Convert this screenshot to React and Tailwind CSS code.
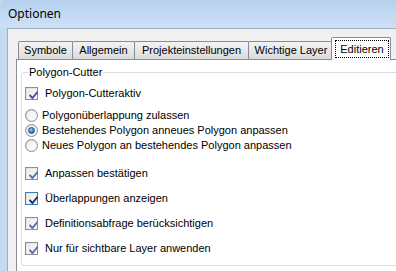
import React from 'react';

// Win7-style check glyph
const Check = ({ color }) => (
  <svg width="9" height="9" viewBox="0 0 9 9" className="absolute left-[1px] top-[1px]">
    <path d="M1 4.5 L3.4 7 L8 1.5" fill="none" stroke={color} strokeWidth="1.9" strokeLinecap="square" />
  </svg>
);

const CheckBox = ({ label, dark = false, mark = '#5a6db4' }) => (
  <div className="flex items-center h-[14px]">
    <div
      className={`relative w-[13px] h-[13px] border ${dark ? 'border-[#3c7fb1]' : 'border-[#8e8f8f]'} bg-gradient-to-br from-[#dcdcdc] to-[#fbfbfb] p-px`}
    >
      <div className="relative w-full h-full border border-[#f4f4f4] bg-gradient-to-br from-[#e6e6e6] to-[#ffffff]">
        <Check color={dark ? '#1c2e80' : mark} />
      </div>
    </div>
    <span className="ml-[7px] leading-none">{label}</span>
  </div>
);

const Radio = ({ label, checked = false }) => (
  <div className="flex items-center h-[15px]">
    <div className="relative w-[13px] h-[13px] rounded-full border border-[#8e8f8f] bg-gradient-to-br from-[#d4d4d4] to-[#fafafa] flex items-center justify-center">
      <div className="w-[9px] h-[9px] rounded-full bg-gradient-to-br from-[#eeeeee] to-[#ffffff] flex items-center justify-center">
        {checked && (
          <div className="w-[7px] h-[7px] rounded-full border border-[#1b4f8c] bg-[radial-gradient(circle_at_40%_35%,#8fd7f7,#1d6fc0_70%)]" />
        )}
      </div>
    </div>
    <span className="ml-[4px] leading-none">{label}</span>
  </div>
);

const Tab = ({ label, w, first = false }) => (
  <div
    className={`${w} ${first ? '' : '-ml-px'} h-[18px] border border-b-0 border-[#898c95] rounded-t-[2px] bg-gradient-to-b from-[#f3f3f3] to-[#dcdcdc] flex items-center justify-center`}
  >
    {label}
  </div>
);

export default function App() {
  return (
    <div className="w-[396px] h-[271px] overflow-hidden flex flex-col bg-[#c4daf1] text-[11px] text-black font-['Liberation_Sans',Arial,sans-serif]">
      {/* title bar */}
      <div className="h-[28px] shrink-0 flex items-center pl-[8px] pb-[1px] bg-gradient-to-b from-[#b6d1ee] to-[#cde1f6] rounded-tl-[5px] font-['Noto_Sans',sans-serif] text-[12px]">
        Optionen
      </div>

      {/* dialog body */}
      <div className="ml-[7px] flex-1 flex flex-col border-l border-t border-[#9aaec4] bg-[#f0f0f0] pt-[8px] pl-[8px]">
        {/* tab strip */}
        <div className="h-[22px] shrink-0 flex items-end pl-[2px]">
          <Tab label="Symbole" w="w-[55px]" first />
          <Tab label="Allgemein" w="w-[63px]" />
          <Tab label="Projekteinstellungen" w="w-[115px]" />
          <Tab label="Wichtige Layer" w="w-[86px]" />
          <div className="relative z-10 -ml-[3px] -mb-px w-[60px] h-[23px] border border-b-0 border-[#898c95] rounded-t-[2px] bg-white flex items-center pl-[3px] pr-px">
            <span className="w-full h-[18px] border border-dotted border-black flex items-center justify-center">
              Editieren
            </span>
          </div>
        </div>

        {/* tab page */}
        <div className="flex-1 border-l border-t border-[#898c95] bg-white pl-[4px] pt-[12px]">
          <div className="relative w-[400px] h-[194px] border border-[#d5dfe5] rounded-[3px] pl-[3px] pt-[13px]">
            <span className="absolute left-[6px] -top-[7px] px-[1px] bg-white leading-[13px]">Polygon-Cutter</span>

            <CheckBox label="Polygon-Cutteraktiv" mark="#3f51a8" />

            <div className="mt-[8px]">
              <Radio label="Polygonüberlappung zulassen" />
              <Radio label="Bestehendes Polygon anneues Polygon anpassen" checked />
              <Radio label="Neues Polygon an bestehendes Polygon anpassen" />
            </div>

            <div className="mt-[13px] flex flex-col gap-[11px]">
              <CheckBox label="Anpassen bestätigen" />
              <CheckBox label="Überlappungen anzeigen" dark />
              <CheckBox label="Definitionsabfrage berücksichtigen" />
              <CheckBox label="Nur für sichtbare Layer anwenden" />
            </div>
          </div>
        </div>
      </div>
    </div>
  );
}
